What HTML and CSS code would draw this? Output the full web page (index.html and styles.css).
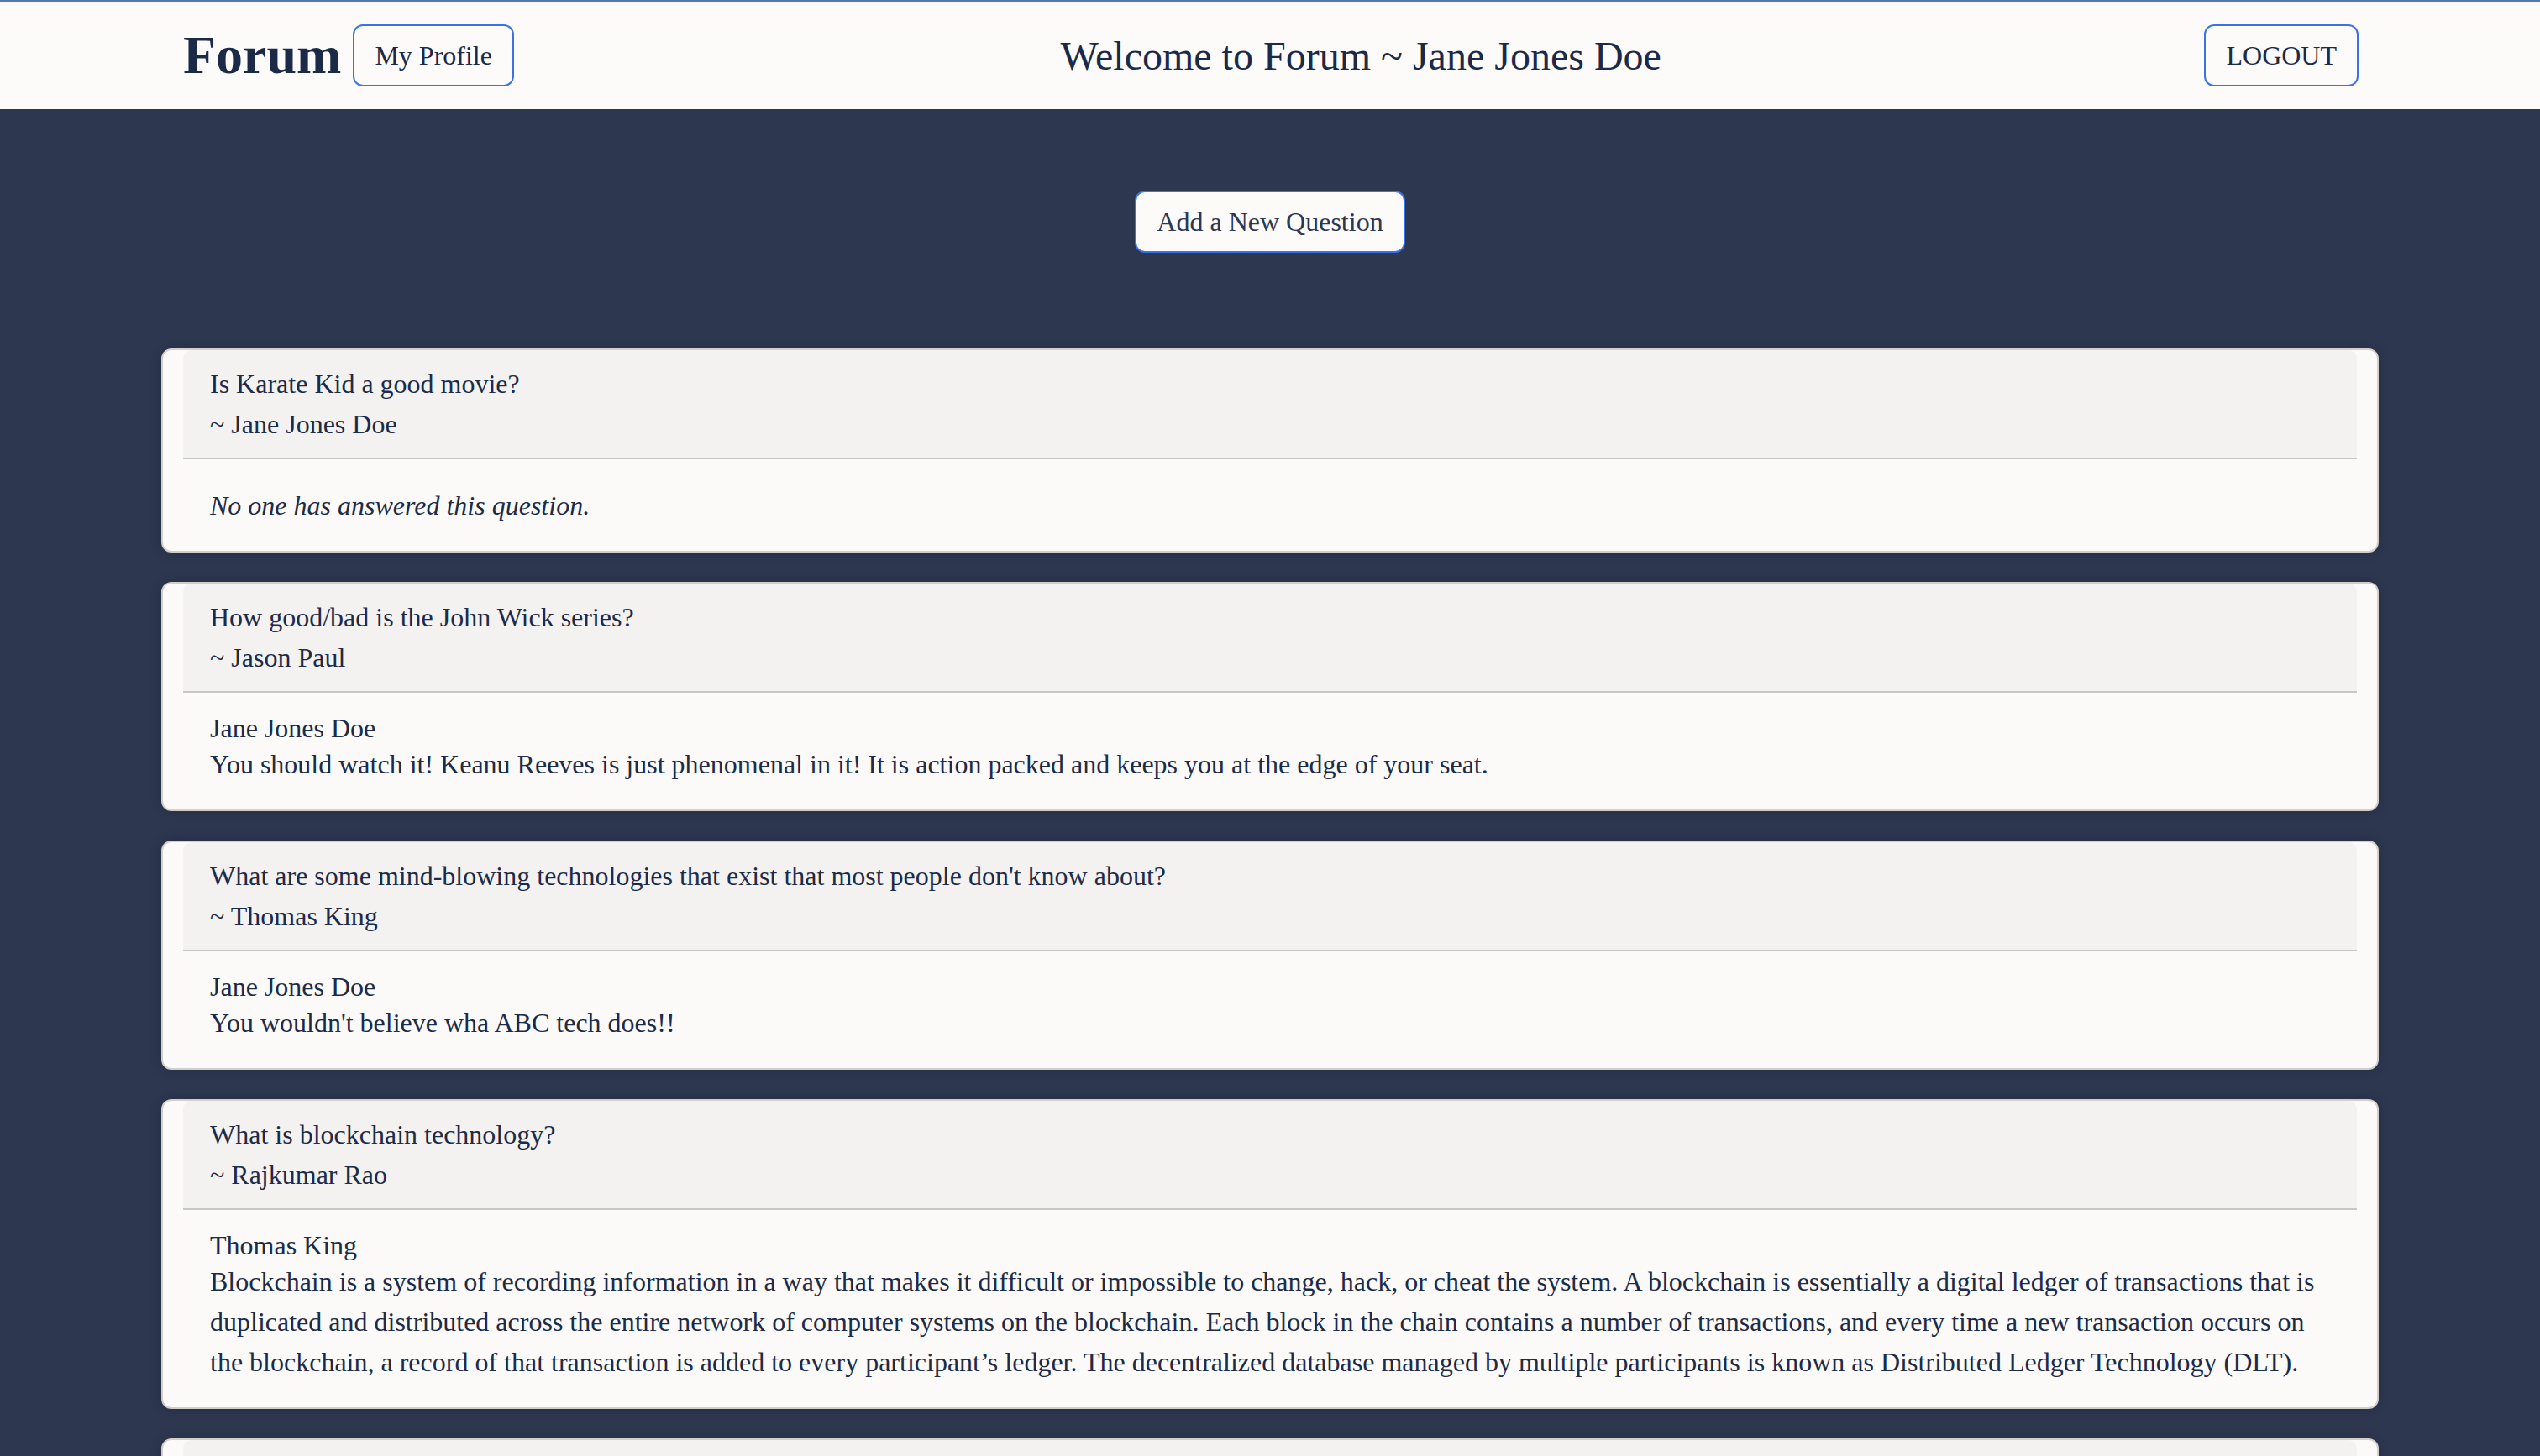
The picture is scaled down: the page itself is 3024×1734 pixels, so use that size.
FILE: index.html
```html
<!DOCTYPE html>
<html lang="en">
<head>
<meta charset="utf-8">
<title>Forum</title>
<link rel="stylesheet" href="styles.css">
</head>
<body>
<header class="topbar">
  <div class="brand">
    <h1 class="logo">Forum</h1>
    <button class="btn">My Profile</button>
  </div>
  <h2 class="welcome">Welcome to Forum ~ Jane Jones Doe</h2>
  <button class="btn">LOGOUT</button>
</header>
<main class="main">
  <div class="actions">
    <button class="btn btn-add">Add a New Question</button>
  </div>
  <section class="questions">
    <article class="card">
      <div class="card-head">
        <div class="q-title">Is Karate Kid a good movie?</div>
        <div class="q-author">~ Jane Jones Doe</div>
      </div>
      <div class="card-body card-body-empty">
        <p class="empty">No one has answered this question.</p>
      </div>
    </article>
    <article class="card">
      <div class="card-head">
        <div class="q-title">How good/bad is the John Wick series?</div>
        <div class="q-author">~ Jason Paul</div>
      </div>
      <div class="card-body">
        <div class="a-author">Jane Jones Doe</div>
        <p class="a-text">You should watch it! Keanu Reeves is just phenomenal in it! It is action packed and keeps you at the edge of your seat.</p>
      </div>
    </article>
    <article class="card">
      <div class="card-head">
        <div class="q-title">What are some mind-blowing technologies that exist that most people don't know about?</div>
        <div class="q-author">~ Thomas King</div>
      </div>
      <div class="card-body">
        <div class="a-author">Jane Jones Doe</div>
        <p class="a-text">You wouldn't believe wha ABC tech does!!</p>
      </div>
    </article>
    <article class="card">
      <div class="card-head">
        <div class="q-title">What is blockchain technology?</div>
        <div class="q-author">~ Rajkumar Rao</div>
      </div>
      <div class="card-body">
        <div class="a-author">Thomas King</div>
        <p class="a-text">Blockchain is a system of recording information in a way that makes it difficult or impossible to change, hack, or cheat the system. A blockchain is essentially a digital ledger of transactions that is duplicated and distributed across the entire network of computer systems on the blockchain. Each block in the chain contains a number of transactions, and every time a new transaction occurs on the blockchain, a record of that transaction is added to every participant’s ledger. The decentralized database managed by multiple participants is known as Distributed Ledger Technology (DLT).</p>
      </div>
    </article>
    <article class="card">
      <div class="card-head">
        <div class="q-title">Which programming language should I learn first?</div>
        <div class="q-author">~ Jason Paul</div>
      </div>
      <div class="card-body card-body-empty">
        <p class="empty">No one has answered this question.</p>
      </div>
    </article>
  </section>
</main>
</body>
</html>
```
FILE: styles.css
```css
html, body {
  margin: 0;
  padding: 0;
}

body {
  background: #2d3750;
  font-family: "Liberation Serif", "Times New Roman", Times, serif;
  color: #1c2b48;
  border-top: 2px solid #5878a8;
}

.topbar {
  background: #fcfbfa;
  height: 128px;
  padding: 0 216px 0 218px;
  display: flex;
  align-items: center;
  justify-content: space-between;
}

.brand {
  display: flex;
  align-items: center;
}

.logo {
  margin: 0 14px 0 0;
  font-size: 64px;
  font-weight: bold;
  line-height: normal;
  color: #1b2a47;
}

.welcome {
  margin: 0 0 0 4px;
  font-size: 48px;
  font-weight: normal;
  line-height: normal;
  color: #1b2a47;
}

.btn {
  font-family: inherit;
  font-size: 32px;
  line-height: 38px;
  padding: 16px 24px;
  border: 2px solid #3a73e6;
  border-radius: 12px;
  background: #fcfbfa;
  color: #1b2a47;
  cursor: pointer;
}

.main {
  padding: 97px 0 0;
}

.actions {
  display: flex;
  justify-content: center;
}

.btn-add {
  color: #2d3750;
}

.questions {
  margin: 114px 192px 0;
  display: flex;
  flex-direction: column;
  gap: 35px;
}

.card {
  background: #fbfaf8;
  border: 2px solid #d2cfcb;
  border-radius: 12px;
  padding: 0 24px;
  box-shadow: 0 0 12px rgba(20, 26, 40, 0.35);
}

.card-head {
  background: #f3f2f0;
  border-radius: 10px 10px 0 0;
  padding: 16px 32px;
  border-bottom: 2px solid #c9c7c4;
  font-size: 32px;
  line-height: 48px;
}

.card-body {
  padding: 24px 32px 30px;
  font-size: 32px;
}

.card-body-empty {
  padding: 31px 32px 30px;
}

.a-author {
  line-height: 37px;
}

.a-text {
  margin: 0;
  line-height: 48px;
}

.empty {
  margin: 0;
  font-style: italic;
  line-height: 48px;
}
```
